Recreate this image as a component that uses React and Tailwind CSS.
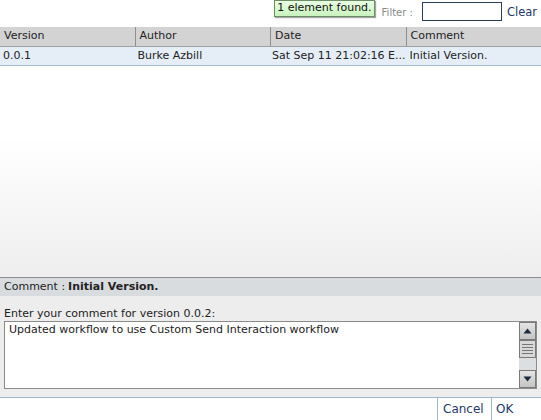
import React, { useState } from 'react';

const rows = [
  { version: '0.0.1', author: 'Burke Azbill', date: 'Sat Sep 11 21:02:16 E...', comment: 'Initial Version.' },
];

const cols = ['Version', 'Author', 'Date', 'Comment'];

function ScrollArrow({ up }) {
  return (
    <div className="h-[18px] w-[17px] border border-[#7a7a7a] bg-gradient-to-b from-[#e4e4e4] to-[#c4c4c4] flex items-center justify-center">
      <svg width="9" height="6" viewBox="0 0 9 6">
        <path d={up ? 'M0.5 5.5 L4.5 0.5 L8.5 5.5 Z' : 'M0.5 0.5 L4.5 5.5 L8.5 0.5 Z'} fill="#1c2a3a" />
      </svg>
    </div>
  );
}

export default function App() {
  const [comment, setComment] = useState('Updated workflow to use Custom Send Interaction workflow');

  return (
    <div className="w-[541px] h-[420px] flex flex-col bg-[#ededed] overflow-hidden text-[11px] text-[#222]" style={{ fontFamily: '"DejaVu Sans", "Liberation Sans", sans-serif' }}>
      {/* filter bar */}
      <div className="h-[27px] shrink-0 bg-white flex items-start justify-end pr-[4px]">
        <div className="h-[17px] px-[2px] flex items-center bg-gradient-to-b from-[#e9ffe4] to-[#c9f2bd] border border-[#6b8f62] shadow-[1px_1px_1px_rgba(0,0,0,0.35)] text-[#111]">
          1 element found.
        </div>
        <span className="ml-[7px] mt-[5px] text-[10px] text-[#8a8a8a]">Filter :</span>
        <input className="ml-[9px] mt-[2px] w-[80px] h-[19px] border border-[#2a3d55] bg-white outline-none px-1" />
        <span className="ml-[5px] mt-[4px] text-[11.5px] text-[#23386a]">Clear</span>
      </div>

      {/* table */}
      <div className="h-[250px] shrink-0 flex flex-col bg-gradient-to-b from-white from-[45%] to-[#eeeeee]">
        <div className="h-[20px] flex bg-[#d3d3d3] border-b border-[#a0a0a0]">
          {cols.map((c, i) => (
            <div key={c} className={`flex-1 flex items-center pl-[4px] ${i > 0 ? 'border-l border-[#8e8e8e]' : ''}`}>
              {c}
            </div>
          ))}
        </div>
        {rows.map(r => (
          <div key={r.version} className="h-[19px] flex bg-[#e5eef7] border-b border-[#a9bfd6]">
            <div className="flex-1 flex items-center pl-[3px]">{r.version}</div>
            <div className="flex-1 flex items-center pl-[3px]">{r.author}</div>
            <div className="flex-1 flex items-center pl-[3px] whitespace-nowrap">{r.date}</div>
            <div className="flex-1 flex items-center pl-[4px]">{r.comment}</div>
          </div>
        ))}
      </div>

      {/* selected comment */}
      <div className="h-[19px] shrink-0 flex items-center pl-[4px] bg-[#d8dcdf] border-t border-[#8a8a8a]">
        Comment : <span className="font-bold ml-[3px]">Initial Version.</span>
      </div>

      {/* new comment */}
      <div className="flex-1 px-[4px] pt-[11px]">
        <div className="leading-[13px]">Enter your comment for version 0.0.2:</div>
        <div className="mt-[1px] h-[68px] flex border border-[#8b8b8b] bg-white">
          <textarea
            value={comment}
            onChange={e => setComment(e.target.value)}
            className="flex-1 resize-none outline-none pl-[4px] pt-[1px] leading-[13px] text-[11px] text-[#222]"
            style={{ fontFamily: '"DejaVu Sans", "Liberation Sans", sans-serif' }}
          />
          <div className="w-[17px] flex flex-col bg-[#dcdfe2]">
            <ScrollArrow up />
            <div className="h-[18px] w-[17px] border border-[#7a7a7a] bg-[#d8d8d8] flex flex-col items-center justify-center gap-[2px]">
              <div className="w-[11px] h-px bg-[#777]" />
              <div className="w-[11px] h-px bg-[#777]" />
              <div className="w-[11px] h-px bg-[#777]" />
              <div className="w-[11px] h-px bg-[#777]" />
            </div>
            <div className="flex-1" />
            <ScrollArrow />
          </div>
        </div>
      </div>

      {/* buttons */}
      <div className="h-[23px] shrink-0 flex justify-end bg-white border-t border-[#9fb6cf] pr-[13px]">
        <div className="w-[54px] flex items-center pl-[5px] border-l border-[#9fb6cf] text-[12px] text-[#23386a]">Cancel</div>
        <div className="w-[37px] flex items-center pl-[4px] border-l border-[#9fb6cf] text-[12px] text-[#23386a]">OK</div>
      </div>
    </div>
  );
}
